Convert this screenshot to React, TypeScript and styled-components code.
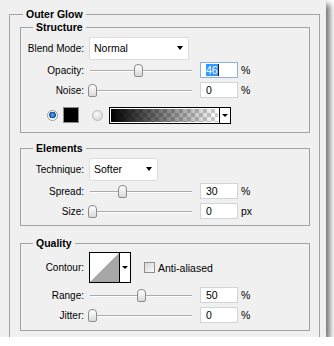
import React from "react";
import styled, { createGlobalStyle } from "styled-components";

const Global = createGlobalStyle`
  html, body { margin: 0; padding: 0; background: #ffffff; }
  body { font-family: "Liberation Sans", Arial, sans-serif; font-size: 10px; color: #000; }
`;

const Panel = styled.div`
  width: 326px;
  height: 337px;
  overflow: hidden;
  background: #f0f0f0;
  box-shadow: 4px 4px 6px rgba(0, 0, 0, 0.55);
`;

const Group = styled.fieldset<{ $m: string; $p: string }>`
  margin: ${(p) => p.$m};
  padding: ${(p) => p.$p};
  border: 1px solid #a3a3a3;
  min-width: 0;
`;

const Legend = styled.legend<{ $ml: number }>`
  margin-left: ${(p) => p.$ml}px;
  padding: 0 3px;
  font-weight: bold;
  font-size: 10.5px;
  line-height: 13px;
`;

const Row = styled.div<{ $h?: number; $mt?: number }>`
  display: flex;
  align-items: center;
  height: ${(p) => p.$h ?? 20}px;
  margin-top: ${(p) => p.$mt ?? 0}px;
`;

const Label = styled.span`
  flex: none;
  width: 63px;
  text-align: right;
  white-space: nowrap;
`;

const Select = styled.div<{ $w: number }>`
  flex: none;
  box-sizing: border-box;
  width: ${(p) => p.$w}px;
  height: 23px;
  margin-left: 5px;
  padding: 0 5px 1px 4px;
  display: flex;
  align-items: center;
  justify-content: space-between;
  background: #fff;
  border: 1px solid #dcdcdc;
  border-radius: 2px;
  font-size: 10.5px;
`;

const Arrow = styled.span`
  width: 0;
  height: 0;
  border-left: 3.5px solid transparent;
  border-right: 3.5px solid transparent;
  border-top: 4px solid #000;
`;

const Slider = styled.div`
  position: relative;
  flex: none;
  width: 106px;
  height: 13px;
  margin-left: 4px;
  margin-right: 6px;
  &::before {
    content: "";
    position: absolute;
    left: 2px;
    right: 2px;
    top: 6px;
    height: 1px;
    background: #acacac;
    box-shadow: 0 1px 0 #ffffff;
  }
`;

const Thumb = styled.div`
  position: absolute;
  top: 0;
  width: 9px;
  height: 13px;
  box-sizing: border-box;
  border: 1px solid #8c8c8c;
  border-radius: 4px 4px 2px 2px;
  background: linear-gradient(#ffffff, #d9d9d9);
`;

const Field = styled.div<{ $focus?: boolean }>`
  flex: none;
  box-sizing: border-box;
  width: 38px;
  height: 16px;
  padding-left: 5px;
  display: flex;
  align-items: center;
  background: #fff;
  border: 1px solid ${(p) => (p.$focus ? "#8db2d8" : "#d4d4d4")};
  font-size: 10.5px;
`;

const Selected = styled.span`
  background: #3399ff;
  color: #fff;
  line-height: 12px;
  padding-right: 0.5px;
`;

const Caret = styled.span`
  width: 1px;
  height: 12px;
  background: #222;
`;

const Unit = styled.span`
  margin-left: 3px;
  font-size: 10.5px;
`;

const Radio = styled.span<{ $on?: boolean; $ml: number }>`
  flex: none;
  box-sizing: border-box;
  width: 11px;
  height: 11px;
  margin-left: ${(p) => p.$ml}px;
  border-radius: 50%;
  border: 1px solid ${(p) => (p.$on ? "#8c9aa8" : "#b8b8b8")};
  background: ${(p) =>
    p.$on
      ? "radial-gradient(circle at 50% 45%, #5fb0f0 0, #1a64b8 2.6px, #0d4a90 3.2px, #ffffff 3.6px)"
      : "radial-gradient(circle at 40% 35%, #fbfbfb 0, #dedede 5px)"};
`;

const Swatch = styled.span`
  flex: none;
  box-sizing: border-box;
  width: 16px;
  height: 16px;
  margin-left: 5px;
  background: #000;
  border: 1px solid #8a8a8a;
`;

const GradientPicker = styled.div`
  flex: none;
  box-sizing: border-box;
  width: 122px;
  height: 17px;
  margin-left: 6px;
  display: flex;
  border: 1px solid #000;
  background: #fff;
`;

const GradientFill = styled.div`
  flex: 1;
  margin: 1px;
  background-image: linear-gradient(to right, #000, rgba(0, 0, 0, 0)),
    conic-gradient(#cdcdcd 25%, #ffffff 0 50%, #cdcdcd 0 75%, #ffffff 0);
  background-size: 100% 100%, 8px 8px;
`;

const PickerButton = styled.div`
  flex: none;
  width: 10px;
  display: flex;
  align-items: center;
  justify-content: center;
  border-left: 1px solid #000;
  background: #fff;
`;

const SmallArrow = styled.span`
  width: 0;
  height: 0;
  border-left: 3px solid transparent;
  border-right: 3px solid transparent;
  border-top: 3px solid #000;
`;

const Contour = styled.div`
  flex: none;
  box-sizing: border-box;
  width: 42px;
  height: 31px;
  margin-left: 5px;
  display: flex;
  border: 1px solid #000;
  background: #fff;
`;

const ContourPreview = styled.div`
  flex: 1;
  display: flex;
  & > svg {
    display: block;
    width: 100%;
    height: 100%;
  }
`;

const Check = styled.span`
  flex: none;
  box-sizing: border-box;
  width: 11px;
  height: 11px;
  margin-left: 13px;
  border: 1px solid #8f8f8f;
  background: linear-gradient(135deg, #d6d6d6, #fbfbfb);
`;

const CheckText = styled.span`
  margin-left: 3px;
  font-size: 10.5px;
`;

type SliderRowProps = { label: string; value: number; unit: string; focus?: boolean };

function SliderRow({ label, value, unit, focus }: SliderRowProps) {
  return (
    <Row>
      <Label>{label}</Label>
      <Slider>
        <Thumb style={{ left: value }} />
      </Slider>
      <Field $focus={focus}>
        {focus ? (
          <>
            <Selected>{value}</Selected>
            <Caret />
          </>
        ) : (
          value
        )}
      </Field>
      <Unit>{unit}</Unit>
    </Row>
  );
}

export default function App() {
  return (
    <>
      <Global />
      <Panel>
        <Group $m="8px 6px 0 9px" $p="0 0 30px 0">
          <Legend $ml={13}>Outer Glow</Legend>

          <Group $m="0 9px 0 10px" $p="3px 0 7px 0">
            <Legend $ml={12}>Structure</Legend>
            <Row $h={23}>
              <Label>Blend Mode:</Label>
              <Select $w={100}>
                Normal
                <Arrow />
              </Select>
            </Row>
            <SliderRow label="Opacity:" value={46} unit="%" focus />
            <SliderRow label="Noise:" value={0} unit="%" />
            <Row $mt={5}>
              <Radio $on $ml={26} />
              <Swatch />
              <Radio $ml={13} />
              <GradientPicker>
                <GradientFill />
                <PickerButton>
                  <SmallArrow />
                </PickerButton>
              </GradientPicker>
            </Row>
          </Group>

          <Group $m="9px 9px 0 10px" $p="3px 0 4px 0">
            <Legend $ml={12}>Elements</Legend>
            <Row $h={23}>
              <Label>Technique:</Label>
              <Select $w={69}>
                Softer
                <Arrow />
              </Select>
            </Row>
            <SliderRow label="Spread:" value={30} unit="%" />
            <SliderRow label="Size:" value={0} unit="px" />
          </Group>

          <Group $m="11px 9px 0 10px" $p="2px 0 5px 0">
            <Legend $ml={12}>Quality</Legend>
            <Row $h={31}>
              <Label>Contour:</Label>
              <Contour>
                <ContourPreview>
                  <svg viewBox="0 0 30 29" preserveAspectRatio="none">
                    <polygon points="0,29 30,0 30,29" fill="#a6a6a6" />
                  </svg>
                </ContourPreview>
                <PickerButton>
                  <SmallArrow />
                </PickerButton>
              </Contour>
              <Check />
              <CheckText>Anti-aliased</CheckText>
            </Row>
            <Row $mt={2}>
              <Label>Range:</Label>
              <Slider>
                <Thumb style={{ left: 49 }} />
              </Slider>
              <Field>50</Field>
              <Unit>%</Unit>
            </Row>
            <SliderRow label="Jitter:" value={0} unit="%" />
          </Group>
        </Group>
      </Panel>
    </>
  );
}
